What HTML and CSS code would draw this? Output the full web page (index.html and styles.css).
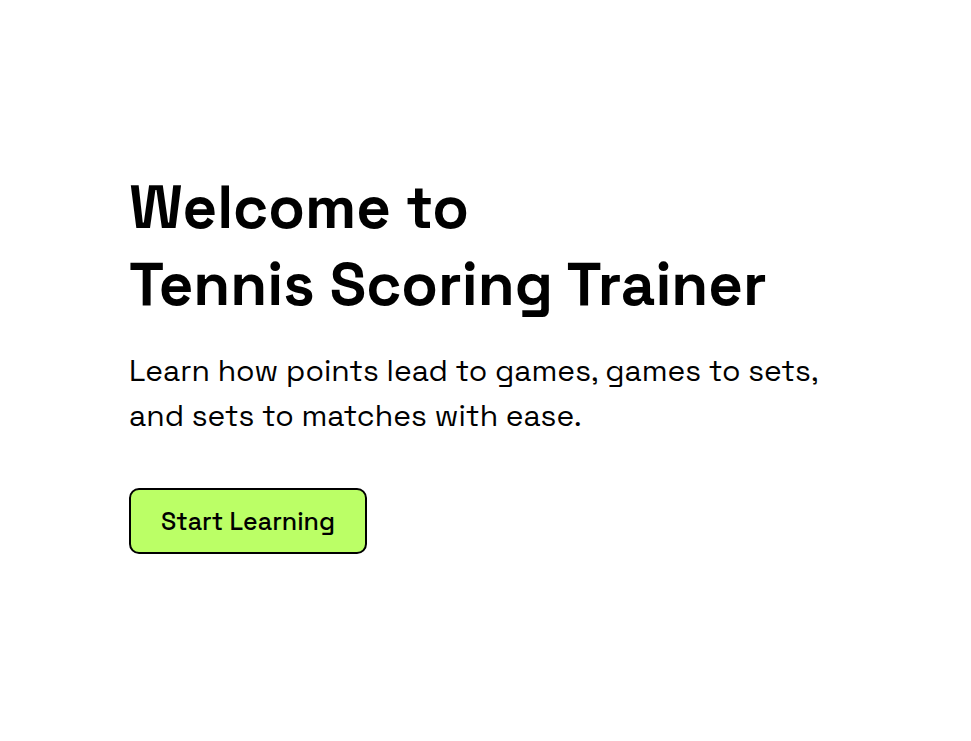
FILE: index.html
```html
<!DOCTYPE html>
<html lang="en">
<head>
<meta charset="utf-8">
<meta name="viewport" content="width=device-width, initial-scale=1">
<title>Tennis Scoring Trainer</title>
<link rel="stylesheet" href="styles.css">
</head>
<body>
<main class="hero">
  <div class="hero-content">
    <h1 class="title">Welcome to<br>Tennis Scoring Trainer</h1>
    <p class="lead">Learn how points lead to games, games to sets,<br>and sets to matches with ease.</p>
    <button class="start" type="button">Start Learning</button>
  </div>
</main>
</body>
</html>
```
FILE: styles.css
```css
* {
  box-sizing: border-box;
}

body {
  margin: 0;
  background: #fff;
  color: #000;
  font-family: "Space Grotesk", Inter, "Liberation Sans", sans-serif;
}

.hero {
  display: flex;
  align-items: center;
  min-height: 100vh;
  padding: 0 129px 18px;
}

.title {
  margin: 0 0 25px;
  font-family: "Space Grotesk SemiBold", "Space Grotesk", Inter, sans-serif;
  font-size: 60px;
  font-weight: 600;
  line-height: 77px;
}

.lead {
  margin: 0 0 50px;
  font-size: 30px;
  line-height: 45px;
}

.start {
  padding: 16px 30px;
  border: 2px solid #000;
  border-radius: 10px;
  background: #bbff66;
  color: #000;
  font-family: inherit;
  font-size: 25px;
  font-weight: 500;
  line-height: 30px;
}
```
